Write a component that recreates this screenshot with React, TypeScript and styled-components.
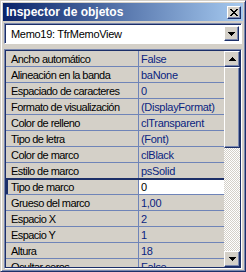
import React from "react";
import styled, { createGlobalStyle } from "styled-components";

const Global = createGlobalStyle`
  html, body { margin: 0; padding: 0; background: #D4D0C8; }
  * { box-sizing: border-box; }
`;

const FONT = `"Liberation Sans", Arial, sans-serif`;
const DARK = "#1C2F68";
const MID = "#7A88B0";
const LINE = "#6F84B8";
const FACE = "#D4D0C8";

const Window = styled.div`
  width: 246px;
  height: 272px;
  background: ${FACE};
  border: 1px solid;
  border-color: ${FACE} ${DARK} ${DARK} ${FACE};
  box-shadow: inset 1px 1px #ffffff, inset -1px -1px ${MID};
  padding: 2px 2px 2px 2px;
  display: flex;
  flex-direction: column;
  font-family: ${FONT};
  overflow: hidden;
`;

const TitleBar = styled.div`
  height: 18px;
  flex: none;
  display: flex;
  align-items: center;
  padding: 0 2px 0 3px;
  background: linear-gradient(to right, #0A246A, #A6CAF0);
`;

const Title = styled.span`
  flex: 1;
  color: #ffffff;
  font-weight: bold;
  font-size: 12px;
  letter-spacing: 0px;
  white-space: nowrap;
`;

const Raised = styled.div<{ $w: number; $h: number }>`
  width: ${(p) => p.$w}px;
  height: ${(p) => p.$h}px;
  flex: none;
  background: ${FACE};
  border: 1px solid;
  border-color: #ffffff ${DARK} ${DARK} #ffffff;
  box-shadow: inset -1px -1px ${MID};
  display: flex;
  align-items: center;
  justify-content: center;
`;

const Combo = styled.div`
  margin: 2px 1px 0 1px;
  height: 21px;
  flex: none;
  border: 1px solid;
  border-color: ${MID} #ffffff #ffffff ${MID};
  box-shadow: inset 1px 1px ${DARK};
  background: #ffffff;
  display: flex;
  align-items: center;
  padding: 1px 2px 1px 6px;
`;

const ComboText = styled.span`
  flex: 1;
  font-size: 11px;
  letter-spacing: -0.3px;
  color: #000000;
  white-space: nowrap;
`;

const Grid = styled.div`
  margin: 5px 1px 0 1px;
  flex: 1;
  min-height: 0;
  border: 1px solid;
  border-color: ${MID} #ffffff #ffffff ${MID};
  box-shadow: inset 1px 1px ${DARK}, inset -1px -1px ${DARK};
  padding: 1px;
  display: flex;
  overflow: hidden;
`;

const Rows = styled.div`
  flex: 1;
  min-width: 0;
  display: flex;
  flex-direction: column;
  overflow: hidden;
`;

const Row = styled.div<{ $sel?: boolean }>`
  flex: none;
  height: 16px;
  display: flex;
  border-bottom: 1px solid ${LINE};
  ${(p) => (p.$sel ? `border-top: 2px solid ${DARK}; margin-top: -1px; height: 17px;` : "")}
`;

const NameCell = styled.div<{ $sel?: boolean }>`
  width: 133px;
  flex: none;
  border-right: 1px solid ${LINE};
  font-size: 11px;
  letter-spacing: -0.55px;
  color: #000000;
  padding-left: ${(p) => (p.$sel ? "3px" : "5px")};
  ${(p) => (p.$sel ? `border-left: 2px solid ${DARK};` : "")}
  white-space: nowrap;
  overflow: hidden;
  display: flex;
  align-items: center;
`;

const ValueCell = styled.div<{ $sel?: boolean }>`
  flex: 1;
  min-width: 0;
  font-size: 11px;
  letter-spacing: -0.3px;
  color: ${(p) => (p.$sel ? "#000000" : "#0A1F80")};
  background: ${(p) => (p.$sel ? "#ffffff" : "transparent")};
  padding-left: 2px;
  white-space: nowrap;
  overflow: hidden;
  display: flex;
  align-items: center;
`;

const ScrollBar = styled.div`
  width: 16px;
  flex: none;
  display: flex;
  flex-direction: column;
`;

const Thumb = styled.div`
  height: 81px;
  flex: none;
  background: ${FACE};
  border: 1px solid;
  border-color: #ffffff ${DARK} ${DARK} #ffffff;
  box-shadow: inset -1px -1px ${MID};
`;

const Track = styled.div`
  flex: 1;
  background: repeating-conic-gradient(#ffffff 0 25%, ${FACE} 0 50%) 0 0 / 2px 2px;
`;

const Arrow = ({ up }: { up?: boolean }) => (
  <svg width="7" height="4" viewBox="0 0 7 4" style={{ display: "block" }}>
    {up ? (
      <path d="M3.5 0 L7 4 L0 4 Z" fill="#000" shapeRendering="crispEdges" />
    ) : (
      <path d="M0 0 L7 0 L3.5 4 Z" fill="#000" shapeRendering="crispEdges" />
    )}
  </svg>
);

const CloseGlyph = () => (
  <svg width="8" height="7" viewBox="0 0 8 7" style={{ display: "block" }}>
    <path
      d="M0 0h2v1h-2z M6 0h2v1h-2z M1 1h2v1h-2z M5 1h2v1h-2z M2 2h4v1h-4z M3 3h2v1h-2z M2 4h4v1h-4z M1 5h2v1h-2z M5 5h2v1h-2z M0 6h2v1h-2z M6 6h2v1h-2z"
      fill="#000"
      shapeRendering="crispEdges"
    />
  </svg>
);

const props: [string, string][] = [
  ["Ancho automático", "False"],
  ["Alineación en la banda", "baNone"],
  ["Espaciado de caracteres", "0"],
  ["Formato de visualización", "(DisplayFormat)"],
  ["Color de relleno", "clTransparent"],
  ["Tipo de letra", "(Font)"],
  ["Color de marco", "clBlack"],
  ["Estilo de marco", "psSolid"],
  ["Tipo de marco", "0"],
  ["Grueso del marco", "1,00"],
  ["Espacio X", "2"],
  ["Espacio Y", "1"],
  ["Altura", "18"],
  ["Ocultar ceros", "False"],
];

const SELECTED = 8;

export default function App() {
  return (
    <>
      <Global />
      <Window>
        <TitleBar>
          <Title>Inspector de objetos</Title>
          <Raised $w={14} $h={13}>
            <CloseGlyph />
          </Raised>
        </TitleBar>
        <Combo>
          <ComboText>Memo19: TfrMemoView</ComboText>
          <Raised $w={15} $h={15}>
            <Arrow />
          </Raised>
        </Combo>
        <Grid>
          <Rows>
            {props.map(([name, value], i) => (
              <Row key={name} $sel={i === SELECTED}>
                <NameCell $sel={i === SELECTED}>{name}</NameCell>
                <ValueCell $sel={i === SELECTED}>{value}</ValueCell>
              </Row>
            ))}
          </Rows>
          <ScrollBar>
            <Raised $w={16} $h={16}>
              <Arrow up />
            </Raised>
            <Thumb />
            <Track />
            <Raised $w={16} $h={16}>
              <Arrow />
            </Raised>
          </ScrollBar>
        </Grid>
      </Window>
    </>
  );
}
